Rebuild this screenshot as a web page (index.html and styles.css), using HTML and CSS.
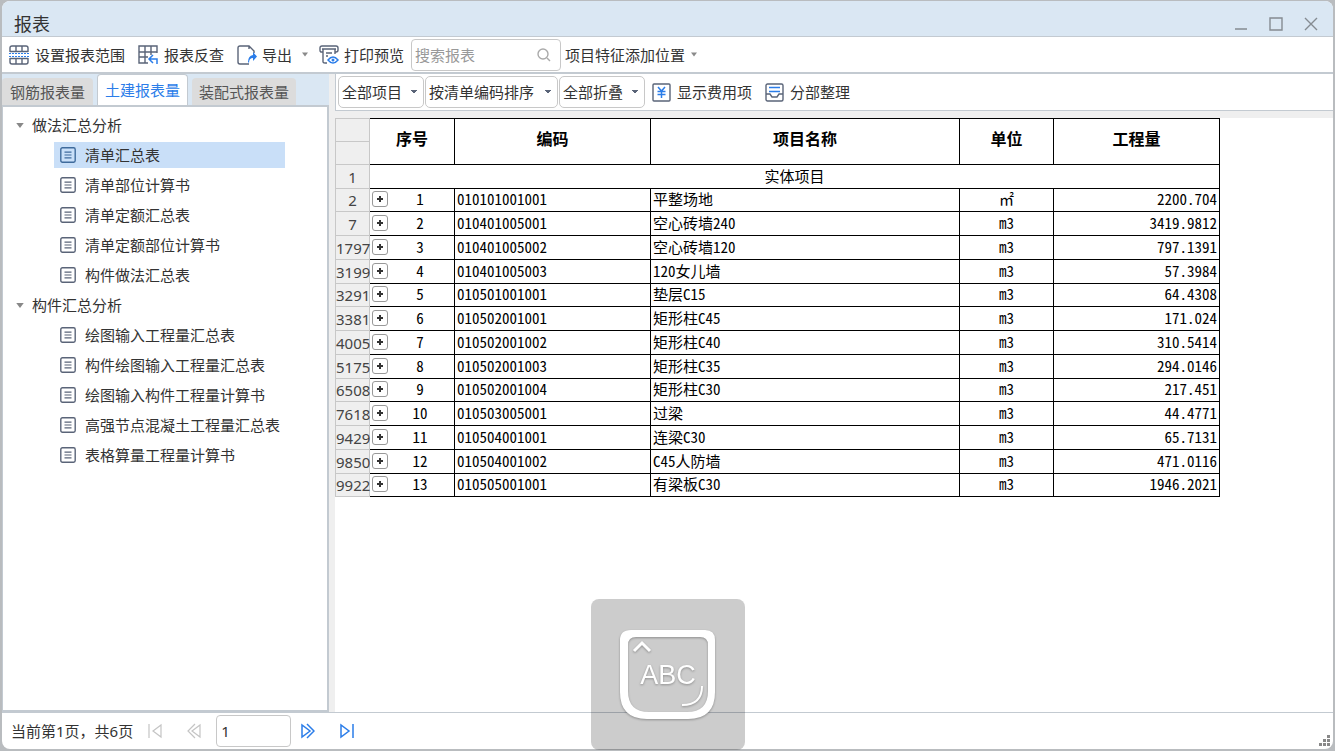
FILE: index.html
```html
<!DOCTYPE html>
<html lang="zh-CN">
<head>
<meta charset="utf-8">
<title>报表</title>
<link rel="stylesheet" href="styles.css">
</head>
<body>
<svg class="defs" aria-hidden="true">
  <symbol id="doc" viewBox="0 0 16 16"><rect x=".8" y=".8" width="14.4" height="14.4" rx="1.6" fill="none" stroke="currentColor" stroke-width="1.4"/><path d="M4.5 5.2h7M4.5 8h7M4.5 10.8h7" stroke="currentColor" stroke-width="1.2"/></symbol>
  <symbol id="down" viewBox="0 0 8 5"><path d="M1 .5h6L4 4.5z" fill="currentColor"/></symbol>
</svg>
<div class="window">
  <header class="titlebar">
    <h1 class="title">报表</h1>
    <div class="window-buttons">
      <button class="icon-button" aria-label="最小化"><svg width="14" height="14" viewBox="0 0 14 14"><path d="M1 12h12" class="control"/></svg></button>
      <button class="icon-button" aria-label="最大化"><svg width="14" height="14" viewBox="0 0 14 14"><path d="M1 1h12v12H1z" class="control"/></svg></button>
      <button class="icon-button" aria-label="关闭"><svg width="14" height="14" viewBox="0 0 14 14"><path d="M1 1l12 12M13 1L1 13" class="control"/></svg></button>
    </div>
  </header>

  <nav class="toolbar">
    <button class="tool"><svg width="20" height="20" viewBox="0 0 20 20"><path d="M1 7V3q0-2 2-2h14q2 0 2 2v4M1 13v4q0 2 2 2h14q2 0 2-2v-4M7 1v6M13 1v6M7 13v6M13 13v6M1 6.500h18M1 13.500h18" class="line"/><path d="M0 8.500h20M0 11.500h20" class="accent dashed"/></svg>设置报表范围</button>
    <button class="tool"><svg width="20" height="20" viewBox="0 0 20 20"><path d="M19 8V1H1v17h9M1 7h18M1 12h9M7 1v17M13 1v9" class="line"/><path d="M19 19v-5h-7M15 10l-4 4 4 4" class="accent"/></svg>报表反查</button>
    <button class="tool export"><svg width="20" height="20" viewBox="0 0 20 20"><path d="M17 8V6l-5-5H3Q1 1 1 3v14q0 2 2 2h9M12 1v3" class="line"/><path d="M12 18q0-5 4-5v3l4-4.500-4-4.500v3q-5 1-5 7z" class="solid"/></svg>导出<svg class="caret" width="8" height="5"><use href="#down"/></svg></button>
    <button class="tool print"><svg width="20" height="20" viewBox="0 0 20 20"><path d="M4 7H2Q1 7 1 5V3q0-2 2-2h14q2 0 2 2v2q0 2-2 2h-1M3 4h14M4 4v13q0 1 2 1h2M7 8h6M16 4v5M7 11h2" class="line"/><path d="M9 15q5-6 10 0-5 6-10 0z" class="accent"/><circle cx="14" cy="15" r="1.500" class="solid"/></svg>打印预览</button>
    <label class="search"><input type="text" placeholder="搜索报表" aria-label="搜索报表"><svg width="14" height="14" viewBox="0 0 14 14"><circle cx="6" cy="6" r="5" class="lens"/><path d="M10 10l3 3" class="lens"/></svg></label>
    <button class="tool position">项目特征添加位置<svg class="caret" width="8" height="5"><use href="#down"/></svg></button>
  </nav>

  <main class="workspace">
    <aside class="sidebar">
      <div class="tabs" role="tablist">
        <button class="tab" role="tab">钢筋报表量</button>
        <button class="tab active" role="tab" aria-selected="true">土建报表量</button>
        <button class="tab" role="tab">装配式报表量</button>
      </div>
      <div class="tree">
        <button class="group"><svg width="10" height="7" viewBox="0 0 8 5"><use href="#down"/></svg>做法汇总分析</button>
        <ul class="items">
          <li><a href="#" class="item selected"><svg width="16" height="16"><use href="#doc"/></svg>清单汇总表</a></li>
          <li><a href="#" class="item"><svg width="16" height="16"><use href="#doc"/></svg>清单部位计算书</a></li>
          <li><a href="#" class="item"><svg width="16" height="16"><use href="#doc"/></svg>清单定额汇总表</a></li>
          <li><a href="#" class="item"><svg width="16" height="16"><use href="#doc"/></svg>清单定额部位计算书</a></li>
          <li><a href="#" class="item"><svg width="16" height="16"><use href="#doc"/></svg>构件做法汇总表</a></li>
        </ul>
        <button class="group"><svg width="10" height="7" viewBox="0 0 8 5"><use href="#down"/></svg>构件汇总分析</button>
        <ul class="items">
          <li><a href="#" class="item"><svg width="16" height="16"><use href="#doc"/></svg>绘图输入工程量汇总表</a></li>
          <li><a href="#" class="item"><svg width="16" height="16"><use href="#doc"/></svg>构件绘图输入工程量汇总表</a></li>
          <li><a href="#" class="item"><svg width="16" height="16"><use href="#doc"/></svg>绘图输入构件工程量计算书</a></li>
          <li><a href="#" class="item"><svg width="16" height="16"><use href="#doc"/></svg>高强节点混凝土工程量汇总表</a></li>
          <li><a href="#" class="item"><svg width="16" height="16"><use href="#doc"/></svg>表格算量工程量计算书</a></li>
        </ul>
      </div>
    </aside>

    <section class="report">
      <div class="filters">
        <select class="filter" aria-label="项目范围"><option>全部项目</option></select>
        <select class="filter sort" aria-label="排序方式"><option>按清单编码排序</option></select>
        <select class="filter" aria-label="折叠方式"><option>全部折叠</option></select>
        <button class="tool fee"><svg width="19" height="19" viewBox="0 0 19 19"><rect x="1" y="1" width="17" height="17" rx="1" class="line"/><path d="M6 4l3.500 4L13 4M5.500 8.500h8M5.500 11.500h8M9.500 8v7" class="accent"/></svg>显示费用项</button>
        <button class="tool"><svg width="19" height="19" viewBox="0 0 19 19"><rect x="1" y="1" width="17" height="17" rx="1.500" class="line"/><path d="M1 11h4l2 3h5l2-3h4" class="line"/><path d="M4 4.500h11M4 8.500h11" class="accent"/></svg>分部整理</button>
      </div>
      <div class="sheet">
        <table class="grid">
          <colgroup><col class="c-row"><col class="c-seq"><col class="c-code"><col class="c-name"><col class="c-unit"><col class="c-qty"></colgroup>
          <thead>
            <tr><td class="num"></td><th rowspan="2">序号</th><th rowspan="2">编码</th><th rowspan="2">项目名称</th><th rowspan="2">单位</th><th rowspan="2">工程量</th></tr>
            <tr><td class="num"></td></tr>
          </thead>
          <tbody>
            <tr><td class="num">1</td><td colspan="5" class="section">实体项目</td></tr>
            <tr><td class="num">2</td><td><div class="seq"><button class="expand" aria-label="展开"></button><span>1</span></div></td><td>010101001001</td><td>平整场地</td><td class="unit">㎡</td><td class="qty">2200.704</td></tr>
            <tr><td class="num">7</td><td><div class="seq"><button class="expand" aria-label="展开"></button><span>2</span></div></td><td>010401005001</td><td>空心砖墙240</td><td class="unit">m3</td><td class="qty">3419.9812</td></tr>
            <tr><td class="num">1797</td><td><div class="seq"><button class="expand" aria-label="展开"></button><span>3</span></div></td><td>010401005002</td><td>空心砖墙120</td><td class="unit">m3</td><td class="qty">797.1391</td></tr>
            <tr><td class="num">3199</td><td><div class="seq"><button class="expand" aria-label="展开"></button><span>4</span></div></td><td>010401005003</td><td>120女儿墙</td><td class="unit">m3</td><td class="qty">57.3984</td></tr>
            <tr><td class="num">3291</td><td><div class="seq"><button class="expand" aria-label="展开"></button><span>5</span></div></td><td>010501001001</td><td>垫层C15</td><td class="unit">m3</td><td class="qty">64.4308</td></tr>
            <tr><td class="num">3381</td><td><div class="seq"><button class="expand" aria-label="展开"></button><span>6</span></div></td><td>010502001001</td><td>矩形柱C45</td><td class="unit">m3</td><td class="qty">171.024</td></tr>
            <tr><td class="num">4005</td><td><div class="seq"><button class="expand" aria-label="展开"></button><span>7</span></div></td><td>010502001002</td><td>矩形柱C40</td><td class="unit">m3</td><td class="qty">310.5414</td></tr>
            <tr><td class="num">5175</td><td><div class="seq"><button class="expand" aria-label="展开"></button><span>8</span></div></td><td>010502001003</td><td>矩形柱C35</td><td class="unit">m3</td><td class="qty">294.0146</td></tr>
            <tr><td class="num">6508</td><td><div class="seq"><button class="expand" aria-label="展开"></button><span>9</span></div></td><td>010502001004</td><td>矩形柱C30</td><td class="unit">m3</td><td class="qty">217.451</td></tr>
            <tr><td class="num">7618</td><td><div class="seq"><button class="expand" aria-label="展开"></button><span>10</span></div></td><td>010503005001</td><td>过梁</td><td class="unit">m3</td><td class="qty">44.4771</td></tr>
            <tr><td class="num">9429</td><td><div class="seq"><button class="expand" aria-label="展开"></button><span>11</span></div></td><td>010504001001</td><td>连梁C30</td><td class="unit">m3</td><td class="qty">65.7131</td></tr>
            <tr><td class="num">9850</td><td><div class="seq"><button class="expand" aria-label="展开"></button><span>12</span></div></td><td>010504001002</td><td>C45人防墙</td><td class="unit">m3</td><td class="qty">471.0116</td></tr>
            <tr><td class="num">9922</td><td><div class="seq"><button class="expand" aria-label="展开"></button><span>13</span></div></td><td>010505001001</td><td>有梁板C30</td><td class="unit">m3</td><td class="qty">1946.2021</td></tr>
          </tbody>
        </table>
      </div>
    </section>
  </main>

  <footer class="pager">
    <span class="summary">当前第1页，共6页</span>
    <button class="icon-button" aria-label="第一页" disabled><svg width="14" height="16" viewBox="0 0 14 16"><path d="M1 1v14M13 2v12L5 8z" class="off"/></svg></button>
    <button class="icon-button prev" aria-label="上一页" disabled><svg width="14" height="16" viewBox="0 0 14 16"><path d="M8 1L1 8l7 7M13 2v12L5 8z" class="off"/></svg></button>
    <input class="page" type="text" value="1" aria-label="页码">
    <button class="icon-button next" aria-label="下一页"><svg width="14" height="16" viewBox="0 0 14 16"><path d="M6 1l7 7-7 7M1 2v12l8-6z" class="accent"/></svg></button>
    <button class="icon-button last" aria-label="最后一页"><svg width="14" height="16" viewBox="0 0 14 16"><path d="M13 1v14M1 2v12l8-6z" class="accent"/></svg></button>
    <svg class="grip" width="11" height="11" viewBox="0 0 11 11"><path d="M8 0h3v3H8zM4 4h3v3H4zM8 4h3v3H8zM0 8h3v3H0zM4 8h3v3H4zM8 8h3v3H8z"/></svg>
  </footer>
</div>

<div class="caps-hint" role="status">
  <svg width="104" height="100" viewBox="0 0 104 100">
    <g class="shadowed">
      <path fill="#fff" fill-rule="evenodd" d="M15 3h74q10 0 10 10v52q0 27-27 27H31Q4 92 4 65V13Q4 3 15 3zM20 10q-8 0-8 8v46q0 21 21 21h38q21 0 21-21V18q0-8-8-8z"/>
      <path d="M18 24l8-8 8 8" fill="none" stroke="#fff" stroke-width="3"/>
      <path d="M86 59q0 19-20 19" fill="none" stroke="#fff" stroke-width="2"/>
      <text x="52" y="57" text-anchor="middle" class="caps-text">ABC</text>
    </g>
  </svg>
</div>
</body>
</html>
```
FILE: styles.css
```css
* { box-sizing: border-box; }

body {
  margin: 0;
  height: 100vh;
  padding: 1px 2px 2px;
  background: #b9bcbf;
  color: #333;
  font: 15px/22px "Noto Sans", "Noto Sans CJK SC", sans-serif;
}

button, input, select { font: inherit; color: inherit; }
button { border: 0; padding: 0; background: none; }
svg { flex: none; display: block; }

.defs { position: absolute; width: 0; height: 0; }

.line { fill: none; stroke: #5a6478; stroke-width: 1.4; }
.accent { fill: none; stroke: #2b7de9; stroke-width: 1.5; }
.solid { fill: #2b7de9; }
.dashed { stroke-dasharray: 2 1; stroke-width: 1; }
.control { fill: none; stroke: #858b91; stroke-width: 1.4; }
.lens { fill: none; stroke: #aaa; stroke-width: 1.4; }
.off { fill: none; stroke: #c4c4c4; stroke-width: 1.2; }

.window {
  display: flex;
  flex-direction: column;
  height: 100%;
  background: #fff;
  border-radius: 8px;
  overflow: hidden;
}

.titlebar {
  display: flex;
  justify-content: space-between;
  align-items: center;
  flex: none;
  height: 36px;
  padding: 11px 15px 0 12px;
  background: #dae7f3;
  border-bottom: 1px solid #c3cad1;
}
.title { margin: 0; font-size: 18px; font-weight: 400; }
.window-buttons { display: flex; gap: 21px; }

.toolbar {
  display: flex;
  align-items: center;
  flex: none;
  height: 37px;
  padding-left: 7px;
  border-bottom: 2px solid #c3cad1;
}
.tool { display: flex; align-items: center; gap: 6px; margin-right: 13px; white-space: nowrap; }
.caret { color: #8a8a8a; }
.export { gap: 5px; margin-right: 10px; }
.export .caret { margin-left: 4px; }
.print { gap: 5px; margin-right: 7px; }
.position { margin-left: 4px; gap: 5px; }

.search {
  display: flex;
  align-items: center;
  width: 150px;
  height: 32px;
  padding: 0 9px 0 3px;
  border: 1px solid #c8c8c8;
  border-radius: 4px;
}
.search input { flex: 1; min-width: 0; padding: 0; border: 0; outline: 0; background: none; }
.search input::placeholder { color: #999; }

.workspace { display: flex; flex: 1; min-height: 0; background: #efefef; }

.sidebar { display: flex; flex-direction: column; flex: none; width: 327px; }
.tabs {
  display: flex;
  align-items: flex-end;
  flex: none;
  gap: 4px;
  height: 31px;
  background: #dae7f3;
}
.tab {
  height: 27px;
  padding: 0 7px;
  border-radius: 4px 4px 0 0;
  background: #dcdcdc;
  color: #555;
}
.tab.active { height: 31px; border: 1px solid #c3cad1; border-bottom: 0; background: #fff; color: #2b7de9; }
.tab:first-child { padding: 0 8px; }
.tree {
  flex: 1;
  padding: 3px 0;
  background: #fff;
  border: solid #c3cad1;
  border-width: 2px 2px 2px 1px;
}
.group { display: flex; align-items: center; gap: 7px; height: 30px; padding-left: 12px; color: #333; }
.group svg { color: #888; }
.items { margin: 0; padding: 0 42px 0 51px; list-style: none; }
.items li { padding: 2px 0; }
.item {
  display: flex;
  align-items: center;
  gap: 9px;
  height: 26px;
  padding-left: 6px;
  color: #333;
  text-decoration: none;
  white-space: nowrap;
}
.item svg { color: #5a6478; }
.item.selected { background: #c9dff8; }
.item.selected svg { color: #3f6b9c; }

.report { display: flex; flex-direction: column; flex: 1; min-width: 0; margin-left: 6px; }
.filters {
  display: flex;
  align-items: center;
  flex: none;
  height: 37px;
  padding-left: 2px;
  background: #fff;
  border-bottom: 1px solid #c3cad1;
  border-left: 1px solid #c3cad1;
}
.filter {
  width: 86px;
  height: 32px;
  margin-right: 1px;
  padding: 0 3px;
  border: 1px solid #c8c8c8;
  border-radius: 5px;
  appearance: none;
  background:
    linear-gradient(to bottom left, #5a6478 50%, transparent 50%) right 9px center / 3px 4px no-repeat,
    linear-gradient(to bottom right, #5a6478 50%, transparent 50%) right 6px center / 3px 4px no-repeat,
    #fff;
}
.filter.sort { width: 133px; }
.fee { margin-left: 6px; }

.sheet { flex: 1; min-height: 0; margin-top: 7px; background: #fff; overflow: hidden; }
.grid {
  width: 885px;
  table-layout: fixed;
  border-spacing: 0;
  color: #000;
  font: 15px/20px "Noto Sans CJK SC", sans-serif;
  font-feature-settings: "hwid";
}
.c-row { width: 35px; }
.c-seq { width: 85px; }
.c-code { width: 196px; }
.c-name { width: 309px; }
.c-unit { width: 94px; }
.c-qty { width: 166px; }
.grid td, .grid th { padding: 0 2px 2px; border: solid #000; border-width: 0 1px 1px 0; }
.grid th { padding-bottom: 8px; border-top-width: 1px; font-size: 16px; font-weight: 700; }
.grid tr { height: 24px; }
.grid thead tr + tr, .grid tbody tr:nth-child(4n+2) { height: 23px; }
.grid .num {
  padding: 0;
  background: #efefef;
  border-color: #c8c8c8;
  border-left-width: 1px;
  color: #444;
  font-family: "Noto Sans", sans-serif;
  text-align: center;
}
.grid thead tr:first-child .num { border-top-width: 1px; }
.grid .section, .grid .unit { text-align: center; }
.grid .qty { text-align: right; }
.seq { display: flex; align-items: center; }
.seq span { flex: 1; text-align: center; }
.expand {
  width: 16px;
  height: 16px;
  border: 1px solid #999;
  border-radius: 3px;
  background:
    linear-gradient(#333, #333) center / 6px 2px no-repeat,
    linear-gradient(#333, #333) center / 2px 6px no-repeat,
    #fff;
}
.grid td, .grid th { line-height: 20px; }

.pager {
  display: flex;
  align-items: center;
  flex: none;
  height: 37px;
  padding: 0 3px 0 9px;
  border-top: 1px solid #c3cad1;
}
.summary { margin-right: 15px; }
.prev { margin: 0 15px 0 25px; }
.page { width: 75px; height: 32px; padding: 0 4px; border: 1px solid #c8c8c8; border-radius: 4px; }
.next { margin: 0 25px 0 10px; }
.grip { align-self: flex-end; margin: 0 0 3px auto; fill: #888; }

.caps-hint {
  position: absolute;
  bottom: 1px;
  left: 50%;
  display: flex;
  justify-content: center;
  width: 154px;
  height: 151px;
  padding-top: 28px;
  border-radius: 8px;
  background: rgba(0, 0, 0, 0.2);
  transform: translateX(-50%);
}
.shadowed { filter: drop-shadow(0 1px 1px rgba(0, 0, 0, 0.3)); }
.caps-text { fill: #fff; font: 27px "Liberation Sans", sans-serif; }
```
